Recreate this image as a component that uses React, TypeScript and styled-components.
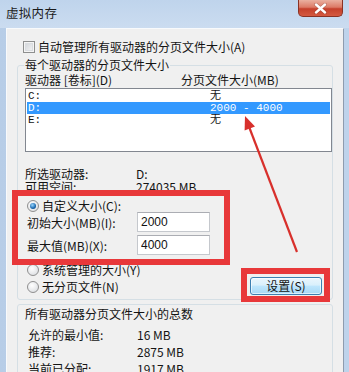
import styled, { createGlobalStyle } from 'styled-components';

const GlobalStyle = createGlobalStyle`
  html, body {
    margin: 0;
    padding: 0;
    background: #c6d9ee;
  }
  body {
    font-family: "Noto Sans CJK SC", "Noto Sans", sans-serif;
    font-size: 12px;
    color: #141414;
  }
`;

const Window = styled.div`
  position: relative;
  width: 349px;
  height: 372px;
  overflow: hidden;
  display: flex;
  flex-direction: column;
  background: linear-gradient(90deg, #b7cde7 0%, #c9dbef 50%, #bed3eb 100%);
`;

const TitleBar = styled.div`
  height: 28px;
  flex: none;
  display: flex;
  align-items: flex-start;
  padding-left: 6px;
  background: linear-gradient(#bfd4ec, #cbdcf0);
`;

const Title = styled.div`
  margin-top: 5px;
  font-size: 12.5px;
  line-height: 16px;
  letter-spacing: 0.3px;
  color: #1b1b1b;
`;

const CloseButton = styled.div`
  margin-left: auto;
  margin-right: 6px;
  width: 45px;
  height: 17px;
  box-sizing: border-box;
  border: 1px solid #8a3224;
  border-top: none;
  border-radius: 0 0 5px 5px;
  background: linear-gradient(#eab0a0 0%, #dc7a66 45%, #c5402b 55%, #d45a41 100%);
  display: flex;
  align-items: center;
  justify-content: center;
`;

const Frame = styled.div`
  flex: 1;
  display: flex;
  padding: 0 5px 0 6px;
`;

const Body = styled.div`
  flex: 1;
  background: #f0f0f0;
  border-left: 1px solid #f8fafc;
  border-top: 1px solid #f8fafc;
  border-right: 1px solid #8e9cae;
  padding: 11px 10px 0 10px;
`;

const CheckRow = styled.div`
  display: flex;
  align-items: center;
  gap: 3px;
  height: 14px;
  line-height: 14px;
  padding-left: 6px;
`;

const CheckBox = styled.span`
  width: 12px;
  height: 12px;
  box-sizing: border-box;
  border: 1px solid #8e8f8f;
  background: linear-gradient(135deg, #cdd1d6, #f7f7f7);
  box-shadow: inset 0 0 0 1px #f4f4f4, inset 0 0 0 2px #d9dce0;
`;

const Group = styled.fieldset`
  margin: 4px 0 0;
  min-width: 0;
  border: 1px solid #d5dfe5;
  border-radius: 3px;
  padding: 1px 10px 4px 7px;
`;

const Legend = styled.legend`
  padding: 0 1px;
  margin-left: -1px;
  line-height: 14px;
`;

const HeaderRow = styled.div`
  display: grid;
  grid-template-columns: 156px 1fr;
  height: 14px;
  line-height: 14px;
`;

const DriveList = styled.div`
  margin: 1px -10px 0 0;
  height: 64px;
  box-sizing: border-box;
  border: 1px solid #828790;
  background: #fff;
  padding: 1px;
`;

const DriveRow = styled.div<{ $selected?: boolean }>`
  display: grid;
  grid-template-columns: 182px 1fr;
  height: 12px;
  line-height: 12px;
  padding-left: 1px;
  background: ${p => (p.$selected ? '#3399ff' : 'transparent')};
  color: ${p => (p.$selected ? '#fff' : '#141414')};
  font-family: "Liberation Mono", "Noto Sans CJK SC", monospace;
  font-size: 11px;
`;

const InfoBlock = styled.div`
  margin-top: 15px;
`;

const InfoRow = styled.div`
  display: grid;
  grid-template-columns: 111px 1fr;
  height: 13px;
  line-height: 13px;
`;

const RadioRow = styled.div<{ $gap?: number }>`
  display: flex;
  align-items: center;
  gap: 3px;
  height: 12px;
  line-height: 12px;
  padding-left: 2px;
  margin-top: ${p => p.$gap ?? 0}px;
`;

const Radio = styled.span<{ $checked?: boolean }>`
  width: 12px;
  height: 12px;
  box-sizing: border-box;
  border-radius: 50%;
  border: 1px solid #8f8f8f;
  background: radial-gradient(circle at 40% 35%, #ffffff, #e2e4e7 70%, #cfd2d6);
  display: flex;
  align-items: center;
  justify-content: center;
  &::after {
    content: '';
    display: ${p => (p.$checked ? 'block' : 'none')};
    width: 6px;
    height: 6px;
    border-radius: 50%;
    background: radial-gradient(circle at 40% 35%, #9bd7ff, #1a68ae 60%, #06386a);
  }
`;

const FieldRow = styled.div<{ $gap?: number }>`
  display: grid;
  grid-template-columns: 110px 73px;
  align-items: center;
  height: 20px;
  padding-left: 2px;
  margin-top: ${p => p.$gap ?? 0}px;
`;

const SizeInput = styled.input`
  width: 73px;
  height: 20px;
  box-sizing: border-box;
  border: 1px solid #c5c8cd;
  border-top-color: #abadb3;
  background: #fff;
  padding: 0 3px;
  font-family: "Liberation Sans", "Noto Sans", sans-serif;
  font-size: 12px;
  color: #111;
  outline: none;
`;

const LowerRow = styled.div`
  display: flex;
  justify-content: space-between;
  align-items: flex-start;
  margin-top: 9px;
`;

const SetButton = styled.div`
  margin-top: 13px;
  width: 72px;
  height: 18px;
  box-sizing: border-box;
  border: 1px solid #3c7fb1;
  border-radius: 3px;
  background: linear-gradient(#eaf6fd 0%, #d9f0fc 45%, #bee6fd 50%, #a7d9f5 100%);
  box-shadow: inset 0 0 0 1px rgba(255, 255, 255, 0.6);
  display: flex;
  align-items: center;
  justify-content: center;
  line-height: 16px;
`;

const TotalGroup = styled.div`
  margin-top: 4px;
  border: 1px solid #d5dfe5;
  border-radius: 3px;
  padding: 2px 10px 0 7px;
`;

const TotalTitle = styled.div`
  height: 14px;
  line-height: 14px;
`;

const StatList = styled.div`
  margin-top: 5px;
`;

const StatRow = styled.div`
  display: grid;
  grid-template-columns: 109px 1fr;
  height: 17px;
  line-height: 17px;
  padding-left: 3px;
`;

const RedFrame = styled.div<{ $x: number; $y: number; $w: number; $h: number }>`
  position: absolute;
  left: ${p => p.$x}px;
  top: ${p => p.$y}px;
  width: ${p => p.$w}px;
  height: ${p => p.$h}px;
  box-sizing: border-box;
  border: 6px solid #e8383a;
  pointer-events: none;
`;

const Overlay = styled.svg`
  position: absolute;
  left: 0;
  top: 0;
  pointer-events: none;
`;

const drives = [
  { name: 'C:', size: '无' },
  { name: 'D:', size: '2000 - 4000', selected: true },
  { name: 'E:', size: '无' },
];

const stats = [
  ['允许的最小值:', '16 MB'],
  ['推荐:', '2875 MB'],
  ['当前已分配:', '1917 MB'],
];

function App() {
  return (
    <Window>
      <GlobalStyle />
      <TitleBar>
        <Title>虚拟内存</Title>
        <CloseButton>
          <svg width="13" height="11" viewBox="0 0 13 11">
            <path d="M2 1.5 L11 9.5 M11 1.5 L2 9.5" stroke="#5a1a10" strokeWidth="3.4" strokeLinecap="round" opacity="0.35" />
            <path d="M2 1.5 L11 9.5 M11 1.5 L2 9.5" stroke="#fff" strokeWidth="2.4" strokeLinecap="round" />
          </svg>
        </CloseButton>
      </TitleBar>
      <Frame>
        <Body>
          <CheckRow>
            <CheckBox />
            <span>自动管理所有驱动器的分页文件大小(A)</span>
          </CheckRow>

          <Group>
            <Legend>每个驱动器的分页文件大小</Legend>
            <HeaderRow>
              <span>驱动器 [卷标](D)</span>
              <span>分页文件大小(MB)</span>
            </HeaderRow>
            <DriveList>
              {drives.map(d => (
                <DriveRow key={d.name} $selected={d.selected}>
                  <span>{d.name}</span>
                  <span>{d.size}</span>
                </DriveRow>
              ))}
            </DriveList>

            <InfoBlock>
              <InfoRow>
                <span>所选驱动器:</span>
                <span>D:</span>
              </InfoRow>
              <InfoRow>
                <span>可用空间:</span>
                <span>274035 MB</span>
              </InfoRow>
            </InfoBlock>

            <RadioRow $gap={7}>
              <Radio $checked />
              <span>自定义大小(C):</span>
            </RadioRow>
            <FieldRow>
              <span>初始大小(MB)(I):</span>
              <SizeInput readOnly value="2000" />
            </FieldRow>
            <FieldRow $gap={3}>
              <span>最大值(MB)(X):</span>
              <SizeInput readOnly value="4000" />
            </FieldRow>

            <LowerRow>
              <div>
                <RadioRow>
                  <Radio />
                  <span>系统管理的大小(Y)</span>
                </RadioRow>
                <RadioRow $gap={5}>
                  <Radio />
                  <span>无分页文件(N)</span>
                </RadioRow>
              </div>
              <SetButton>设置(S)</SetButton>
            </LowerRow>
          </Group>

          <TotalGroup>
            <TotalTitle>所有驱动器分页文件大小的总数</TotalTitle>
            <StatList>
              {stats.map(([label, value]) => (
                <StatRow key={label}>
                  <span>{label}</span>
                  <span>{value}</span>
                </StatRow>
              ))}
            </StatList>
          </TotalGroup>
        </Body>
      </Frame>

      <RedFrame $x={12} $y={190} $w={218} $h={75} />
      <RedFrame $x={241} $y={268} $w={89} $h={34} />
      <Overlay width="349" height="372" viewBox="0 0 349 372">
        <line x1="297" y1="252" x2="249.5" y2="128" stroke="#d8302c" strokeWidth="2.2" />
        <polygon points="245,116 255,126.6 244.6,130.6" fill="#d8302c" />
      </Overlay>
    </Window>
  );
}

export default App;
